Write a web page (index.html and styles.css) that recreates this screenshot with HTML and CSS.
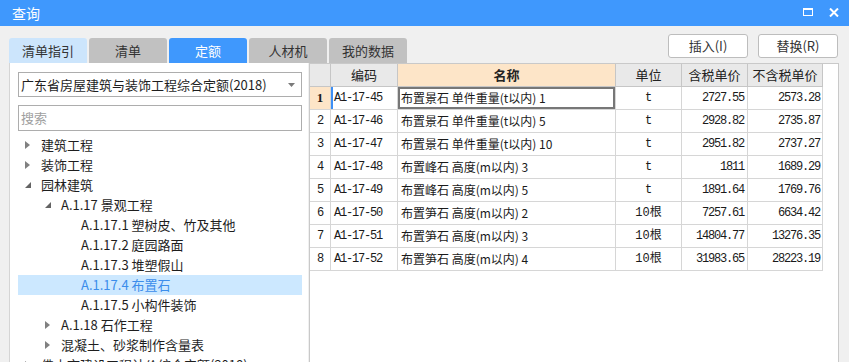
FILE: index.html
```html
<!DOCTYPE html>
<html lang="zh">
<head>
<meta charset="utf-8">
<title>查询</title>
<link rel="stylesheet" href="styles.css">
</head>
<body>
<div class="window">
  <header class="titlebar">
    <span class="title">查询</span>
    <div class="winctl">
      <span class="restore"></span>
      <svg class="close" width="10" height="9" viewBox="0 0 10 9"><path d="M1 0.5 L9 8.5 M9 0.5 L1 8.5" stroke="#fff" stroke-width="2"/></svg>
    </div>
  </header>

  <div class="toolbar">
    <div class="tabs">
      <div class="tab tab-guide">清单指引</div>
      <div class="tab">清单</div>
      <div class="tab tab-active">定额</div>
      <div class="tab">人材机</div>
      <div class="tab">我的数据</div>
    </div>
    <div class="actions">
      <button class="btn">插入(I)</button>
      <button class="btn">替换(R)</button>
    </div>
  </div>

  <div class="content">
    <aside class="leftpane">
      <div class="select">
        <span>广东省房屋建筑与装饰工程综合定额(2018)</span>
        <svg class="caret" width="7" height="4" viewBox="0 0 7 4"><path d="M0 0 H7 L3.5 4 Z" fill="#7a7a7a"/></svg>
      </div>
      <div class="search">搜索</div>
      <ul class="tree">
        <li class="node"><span class="arrow"><svg width="5" height="8" viewBox="0 0 5 8"><path d="M0 0 L5 4 L0 8 Z" fill="#808080"/></svg></span>建筑工程</li>
        <li class="node"><span class="arrow"><svg width="5" height="8" viewBox="0 0 5 8"><path d="M0 0 L5 4 L0 8 Z" fill="#808080"/></svg></span>装饰工程</li>
        <li class="node"><span class="arrow"><svg width="6" height="6" viewBox="0 0 6 6"><path d="M6 0 L6 6 L0 6 Z" fill="#636363"/></svg></span>园林建筑</li>
        <li class="node lv1"><span class="arrow"><svg width="6" height="6" viewBox="0 0 6 6"><path d="M6 0 L6 6 L0 6 Z" fill="#636363"/></svg></span>A.1.17 景观工程</li>
        <li class="node lv2"><span class="arrow"></span>A.1.17.1 塑树皮、竹及其他</li>
        <li class="node lv2"><span class="arrow"></span>A.1.17.2 庭园路面</li>
        <li class="node lv2"><span class="arrow"></span>A.1.17.3 堆塑假山</li>
        <li class="node lv2 selected"><span class="arrow"></span>A.1.17.4 布置石</li>
        <li class="node lv2"><span class="arrow"></span>A.1.17.5 小构件装饰</li>
        <li class="node lv1"><span class="arrow"><svg width="5" height="8" viewBox="0 0 5 8"><path d="M0 0 L5 4 L0 8 Z" fill="#808080"/></svg></span>A.1.18 石作工程</li>
        <li class="node lv1"><span class="arrow"><svg width="5" height="8" viewBox="0 0 5 8"><path d="M0 0 L5 4 L0 8 Z" fill="#808080"/></svg></span>混凝土、砂浆制作含量表</li>
        <li class="node"><span class="arrow"><svg width="5" height="8" viewBox="0 0 5 8"><path d="M0 0 L5 4 L0 8 Z" fill="#808080"/></svg></span>佛山市建设工程计价综合定额(2018)</li>
      </ul>
    </aside>

    <section class="grid">
      <div class="grow head">
        <div class="c c-no"></div>
        <div class="c c-code">编码</div>
        <div class="c c-name h-sel">名称</div>
        <div class="c c-unit">单位</div>
        <div class="c c-p1">含税单价</div>
        <div class="c c-p2">不含税单价</div>
      </div>
      <div class="grow row">
        <div class="c c-no no-sel">1</div>
        <div class="c c-code code-sel">A1-17-45</div>
        <div class="c c-name name-sel">布置景石 单件重量(t以内) 1</div>
        <div class="c c-unit">t</div>
        <div class="c c-p1">2727.55</div>
        <div class="c c-p2">2573.28</div>
      </div>
      <div class="grow row">
        <div class="c c-no">2</div>
        <div class="c c-code">A1-17-46</div>
        <div class="c c-name">布置景石 单件重量(t以内) 5</div>
        <div class="c c-unit">t</div>
        <div class="c c-p1">2928.82</div>
        <div class="c c-p2">2735.87</div>
      </div>
      <div class="grow row">
        <div class="c c-no">3</div>
        <div class="c c-code">A1-17-47</div>
        <div class="c c-name">布置景石 单件重量(t以内) 10</div>
        <div class="c c-unit">t</div>
        <div class="c c-p1">2951.82</div>
        <div class="c c-p2">2737.27</div>
      </div>
      <div class="grow row">
        <div class="c c-no">4</div>
        <div class="c c-code">A1-17-48</div>
        <div class="c c-name">布置峰石 高度(m以内) 3</div>
        <div class="c c-unit">t</div>
        <div class="c c-p1">1811</div>
        <div class="c c-p2">1689.29</div>
      </div>
      <div class="grow row">
        <div class="c c-no">5</div>
        <div class="c c-code">A1-17-49</div>
        <div class="c c-name">布置峰石 高度(m以内) 5</div>
        <div class="c c-unit">t</div>
        <div class="c c-p1">1891.64</div>
        <div class="c c-p2">1769.76</div>
      </div>
      <div class="grow row">
        <div class="c c-no">6</div>
        <div class="c c-code">A1-17-50</div>
        <div class="c c-name">布置笋石 高度(m以内) 2</div>
        <div class="c c-unit">10根</div>
        <div class="c c-p1">7257.61</div>
        <div class="c c-p2">6634.42</div>
      </div>
      <div class="grow row">
        <div class="c c-no">7</div>
        <div class="c c-code">A1-17-51</div>
        <div class="c c-name">布置笋石 高度(m以内) 3</div>
        <div class="c c-unit">10根</div>
        <div class="c c-p1">14804.77</div>
        <div class="c c-p2">13276.35</div>
      </div>
      <div class="grow row">
        <div class="c c-no">8</div>
        <div class="c c-code">A1-17-52</div>
        <div class="c c-name">布置笋石 高度(m以内) 4</div>
        <div class="c c-unit">10根</div>
        <div class="c c-p1">31983.65</div>
        <div class="c c-p2">28223.19</div>
      </div>
    </section>
  </div>
</div>
</body>
</html>
```

FILE: styles.css
```css
* { box-sizing: border-box; }
html, body { margin: 0; padding: 0; }
body {
  width: 849px;
  height: 362px;
  overflow: hidden;
  background: #f0f0f0;
  font-family: "Noto Sans CJK SC", "Noto Sans", sans-serif;
  color: #222;
}
.window { width: 849px; height: 362px; overflow: hidden; }

.titlebar {
  height: 26px;
  background: #3f98fd;
  display: flex;
  align-items: center;
  padding-left: 12px;
}
.title { color: #fff; font-size: 14px; line-height: 26px; }
.winctl {
  margin-left: auto;
  display: flex;
  align-items: center;
  gap: 16px;
  padding-right: 10px;
  height: 26px;
}
.restore {
  display: block;
  width: 10px;
  height: 8px;
  border: 1px solid #fff;
  border-top-width: 2px;
  margin-top: -2px;
}
.close { display: block; margin-top: -2px; }

.toolbar {
  margin-top: 8px;
  height: 29px;
  display: flex;
  padding: 0 11px 0 9px;
}
.tabs { display: flex; gap: 2px; align-self: flex-end; }
.tab {
  width: 78px;
  height: 25px;
  background: #c1c1c1;
  border-radius: 3px 3px 0 0;
  font-size: 13px;
  line-height: 25px;
  text-align: center;
  color: #333;
}
.tab-guide { background: #cce5fc; }
.tab-active { background: #3f98fd; color: #fff; }

.actions { margin-left: auto; display: flex; gap: 10px; align-items: flex-start; }
.btn {
  width: 80px;
  height: 24px;
  background: #fff;
  border: 1px solid #bdbdbd;
  border-radius: 3px;
  font-family: "Noto Sans CJK SC", sans-serif;
  font-size: 13px;
  line-height: 20px;
  color: #333;
  padding: 0;
}

.content { display: flex; height: 299px; overflow: hidden; }

.leftpane {
  margin-left: 9px;
  width: 299px;
  height: 320px;
  background: #fff;
  border-left: 1px solid #d5d5d5;
  padding: 9px 6px 0 8px;
}
.select {
  height: 25px;
  border: 1px solid #adadad;
  display: flex;
  align-items: center;
  padding: 0 6px 0 2px;
  font-size: 13px;
  color: #1e1e1e;
}
.caret { margin-left: auto; }
.search {
  margin-top: 8px;
  height: 26px;
  border: 1px solid #adadad;
  padding-left: 2px;
  font-size: 13px;
  line-height: 24px;
  color: #a0a0a0;
}
.tree { list-style: none; margin: 4px 0 0; padding: 0; }
.node {
  height: 20px;
  display: flex;
  align-items: center;
  font-size: 13px;
  line-height: 20px;
  color: #1e1e1e;
  white-space: nowrap;
}
.node.lv1 { padding-left: 20px; }
.node.lv2 { padding-left: 40px; }
.arrow {
  width: 23px;
  height: 20px;
  display: flex;
  align-items: center;
  padding-left: 7px;
  flex: none;
}
.arrow svg { display: block; }
.node.selected { background: #cce8ff; color: #3b8deb; }

.grid {
  margin-left: 1px;
  width: 530px;
  height: 310px;
  background: #fff;
  border: 1px solid #c9c9c9;
  border-bottom: none;
}
.grow { display: flex; height: 23px; }
.c {
  height: 23px;
  border-right: 1px solid #d6d6d6;
  border-bottom: 1px solid #d6d6d6;
  font-size: 12px;
  line-height: 22px;
  white-space: nowrap;
  overflow: hidden;
  color: #1a1a1a;
}
.c-no { width: 21px; text-align: center; }
.c-code { width: 67px; padding-left: 3px; }
.c-name { width: 218px; padding-left: 3px; }
.c-unit { width: 66px; text-align: center; }
.c-p1 { width: 66px; text-align: right; padding-right: 3px; }
.c-p2 { width: 75px; text-align: right; padding-right: 2px; }

.row .c-no, .row .c-code, .row .c-unit, .row .c-p1, .row .c-p2 {
  font-family: "Liberation Mono", "Noto Sans CJK SC", monospace;
  font-size: 12px;
  letter-spacing: -1.2px;
}
.row .c-unit { letter-spacing: 0; }
.row .c-name { font-family: "Noto Sans CJK SC", sans-serif; font-size: 12px; }

.head .c {
  background: #e9e9e9;
  border-color: #c6c6c6;
  text-align: center;
  font-size: 13px;
  padding: 0;
  color: #222;
}
.head .h-sel { background: #fde5c8; font-weight: bold; }
.row .no-sel {
  background: #fde5c8;
  font-family: "Liberation Serif", serif;
  font-weight: bold;
  font-size: 13px;
  letter-spacing: 0;
}
.code-sel { box-shadow: inset 2px 0 0 #3d8ff5; }
.name-sel { box-shadow: inset 0 0 0 2px #777; }
```
